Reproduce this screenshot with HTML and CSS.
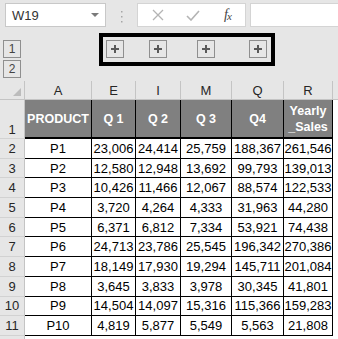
FILE: index.html
```html
<!DOCTYPE html>
<html lang="en">
<head>
  <meta charset="UTF-8">
  <title>Sales Outline</title>
  <link rel="stylesheet" href="styles.css">
</head>
<body>
  <div class="formula-bar">
    <div class="name-box"><span>W19</span><span class="caret"></span></div>
    <div class="grip">
      <svg width="3" height="13" viewBox="0 0 3 13"><rect x="1" y="1" width="1.5" height="1.5" fill="#a6a6a6"/><rect x="1" y="6" width="1.5" height="1.5" fill="#a6a6a6"/><rect x="1" y="11" width="1.5" height="1.5" fill="#a6a6a6"/></svg>
    </div>
    <div class="func-box">
      <span class="func-slot">
        <svg width="12" height="12" viewBox="0 0 12 12"><path d="M1 1 L11 11 M11 1 L1 11" stroke="#b4b4b4" stroke-width="1.3" fill="none"/></svg>
      </span>
      <span class="func-slot">
        <svg width="14" height="11" viewBox="0 0 14 11"><path d="M1 6 L5 10 L13 1" stroke="#b4b4b4" stroke-width="1.6" fill="none"/></svg>
      </span>
      <span class="func-slot fx"><i>f</i><i class="fx-x">x</i></span>
    </div>
    <div class="input-box"></div>
  </div>

  <div class="outline">
    <div class="levels">
      <div class="level">1</div>
      <div class="level">2</div>
    </div>
    <div class="group-box">
      <span class="expand"></span>
      <span class="expand"></span>
      <span class="expand"></span>
      <span class="expand"></span>
    </div>
  </div>

  <table class="sheet">
    <tr class="col-heads">
      <th class="corner"><span class="select-all"></span></th>
      <th class="w-a">A</th>
      <th class="w-e">E</th>
      <th class="w-i">I</th>
      <th class="w-m">M</th>
      <th class="w-q">Q</th>
      <th class="w-r">R</th>
      <th class="w-x"></th>
    </tr>
    <tr class="title-row">
      <th class="row-head">1</th>
      <td>PRODUCT</td>
      <td>Q 1</td>
      <td>Q 2</td>
      <td>Q 3</td>
      <td>Q4</td>
      <td>Yearly<br>_Sales</td>
      <td class="blank"></td>
    </tr>
    <tr><th class="row-head">2</th><td>P1</td><td>23,006</td><td>24,414</td><td>25,759</td><td>188,367</td><td>261,546</td><td class="blank"></td></tr>
    <tr><th class="row-head">3</th><td>P2</td><td>12,580</td><td>12,948</td><td>13,692</td><td>99,793</td><td>139,013</td><td class="blank"></td></tr>
    <tr><th class="row-head">4</th><td>P3</td><td>10,426</td><td>11,466</td><td>12,067</td><td>88,574</td><td>122,533</td><td class="blank"></td></tr>
    <tr><th class="row-head">5</th><td>P4</td><td>3,720</td><td>4,264</td><td>4,333</td><td>31,963</td><td>44,280</td><td class="blank"></td></tr>
    <tr><th class="row-head">6</th><td>P5</td><td>6,371</td><td>6,812</td><td>7,334</td><td>53,921</td><td>74,438</td><td class="blank"></td></tr>
    <tr><th class="row-head">7</th><td>P6</td><td>24,713</td><td>23,786</td><td>25,545</td><td>196,342</td><td>270,386</td><td class="blank"></td></tr>
    <tr><th class="row-head">8</th><td>P7</td><td>18,149</td><td>17,930</td><td>19,294</td><td>145,711</td><td>201,084</td><td class="blank"></td></tr>
    <tr><th class="row-head">9</th><td>P8</td><td>3,645</td><td>3,833</td><td>3,978</td><td>30,345</td><td>41,801</td><td class="blank"></td></tr>
    <tr><th class="row-head">10</th><td>P9</td><td>14,504</td><td>14,097</td><td>15,316</td><td>115,366</td><td>159,283</td><td class="blank"></td></tr>
    <tr><th class="row-head">11</th><td>P10</td><td>4,819</td><td>5,877</td><td>5,549</td><td>5,563</td><td>21,808</td><td class="blank"></td></tr>
    <tr class="empty-row"><th class="row-head"></th><td class="blank"></td><td class="blank"></td><td class="blank"></td><td class="blank"></td><td class="blank"></td><td class="blank"></td><td class="blank"></td></tr>
  </table>
</body>
</html>
```

FILE: styles.css
```css
html, body {
  overflow: hidden;
}
body {
  margin: 0;
  width: 338px;
  height: 339px;
  background: #e6e6e6;
  font-family: 'Liberation Sans', Arial, sans-serif;
  color: #000;
}

/* formula bar */
.formula-bar {
  display: flex;
  height: 30px;
  padding: 3px 0 0 5px;
  box-sizing: border-box;
}
.name-box {
  width: 101px;
  height: 24px;
  box-sizing: border-box;
  background: #fff;
  border: 1px solid #c8c8c8;
  display: flex;
  align-items: center;
  justify-content: space-between;
  padding: 0 6px 0 6px;
  font-size: 13px;
  color: #333;
}
.caret {
  width: 0;
  height: 0;
  border-left: 4px solid transparent;
  border-right: 4px solid transparent;
  border-top: 4px solid #7a7a7a;
}
.grip {
  width: 31px;
  display: flex;
  align-items: center;
  justify-content: center;
}
.func-box {
  width: 109px;
  height: 24px;
  box-sizing: border-box;
  background: #fff;
  border: 1px solid #d4d4d4;
  display: flex;
  align-items: center;
  padding-left: 2px;
}
.func-slot {
  width: 36px;
  display: flex;
  justify-content: center;
  align-items: center;
}
.fx {
  font-family: 'Liberation Serif', 'Times New Roman', serif;
  font-size: 14px;
  color: #444;
  letter-spacing: -1px;
}
.fx-x {
  font-size: 11px;
  position: relative;
  top: 1px;
}
.input-box {
  flex: 1;
  height: 24px;
  margin-left: 4px;
  box-sizing: border-box;
  background: #fff;
  border: 1px solid #d4d4d4;
  border-right: none;
}

/* outline controls */
.outline {
  display: flex;
  height: 51px;
  padding-left: 3px;
}
.levels {
  padding-top: 10px;
}
.level {
  width: 18px;
  height: 18px;
  box-sizing: border-box;
  border: 1px solid #8f8f8f;
  font-size: 12px;
  color: #444;
  text-align: center;
  line-height: 16px;
  margin-bottom: 2px;
}
.group-box {
  margin: 3px 0 0 78px;
  width: 176px;
  height: 33px;
  box-sizing: border-box;
  border: 4px solid #000;
  display: flex;
  padding: 3px 0 0 3px;
}
.expand {
  position: relative;
  width: 18px;
  height: 18px;
  box-sizing: border-box;
  border: 1px solid #8f8f8f;
}
.expand:nth-child(2) { margin-left: 25px; }
.expand:nth-child(3) { margin-left: 30px; }
.expand:nth-child(4) { margin-left: 34px; }
.expand::before,
.expand::after {
  content: '';
  position: absolute;
  background: #595959;
}
.expand::before {
  left: 4px;
  top: 7px;
  width: 8px;
  height: 2px;
}
.expand::after {
  left: 7px;
  top: 4px;
  width: 2px;
  height: 8px;
}

/* worksheet */
.sheet {
  border-collapse: separate;
  border-spacing: 0;
  table-layout: fixed;
  width: 343px;
  font-size: 13px;
}
.sheet th,
.sheet td {
  padding: 0;
  box-sizing: border-box;
  text-align: center;
  vertical-align: middle;
  overflow: hidden;
  white-space: nowrap;
}
.col-heads th {
  height: 19px;
  background: #e6e6e6;
  font-weight: normal;
  color: #262626;
  border-right: 1px solid #c4c4c4;
  border-bottom: 1px solid #c4c4c4;
}
.corner { width: 25px; position: relative; }
.w-a { width: 67px; }
.w-e { width: 44px; }
.w-i { width: 45px; }
.w-m { width: 51px; }
.w-q { width: 52px; }
.w-r { width: 49px; }
.w-x { width: 10px; }
.select-all {
  position: absolute;
  right: 3px;
  bottom: 3px;
  width: 0;
  height: 0;
  border-left: 8px solid transparent;
  border-bottom: 8px solid #bcbcbc;
}
.row-head {
  height: 19.7px;
  background: #e6e6e6;
  font-weight: normal;
  color: #262626;
  border-right: 1px solid #c4c4c4;
  border-bottom: 1px solid #d2d2d2;
}
.sheet td {
  background: #fff;
  border-right: 1px solid #000;
  border-bottom: 1px solid #000;
}
.title-row .row-head {
  height: 39px;
  vertical-align: bottom;
  padding-bottom: 1px;
}
.title-row td {
  background: #808080;
  color: #fff;
  font-weight: bold;
  font-size: 12.5px;
  line-height: 16px;
  border-bottom: 2px solid #000;
}
.sheet td.blank {
  background: #fff;
  border: none;
}
.empty-row .row-head {
  height: 12px;
}
```
